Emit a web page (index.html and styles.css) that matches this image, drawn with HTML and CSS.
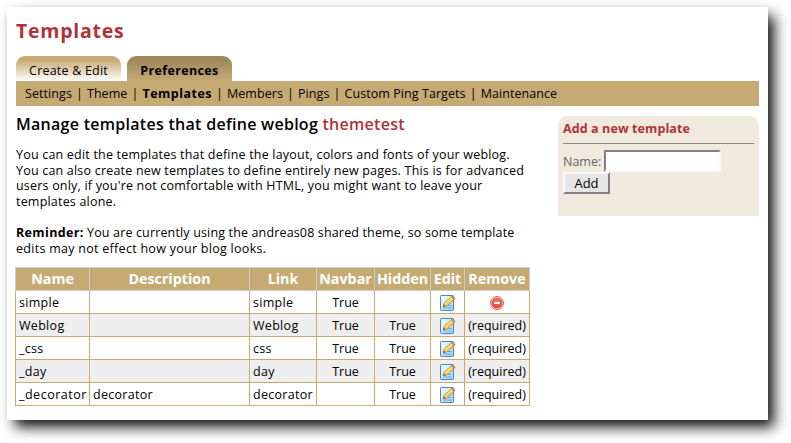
FILE: index.html
```html
<!DOCTYPE html>
<html lang="en">
<head>
<meta charset="utf-8">
<title>Templates</title>
<link rel="stylesheet" href="styles.css">
</head>
<body>
<svg width="0" height="0" class="defs">
  <defs>
    <linearGradient id="sheet" x1="0" y1="0" x2="1" y2="1"><stop offset="0" stop-color="#fff"/><stop offset="1" stop-color="#9ccdf5"/></linearGradient>
    <radialGradient id="red" cx=".5" cy=".35" r=".6"><stop offset="0" stop-color="#f47c6c"/><stop offset="1" stop-color="#db4437"/></radialGradient>
    <symbol id="edit" viewBox="0 0 16 16">
      <rect x=".5" y=".5" width="13" height="15" rx=".8" fill="url(#sheet)" stroke="#4587c4"/>
      <path d="M3 13h8.500M8 10.500h3.500" stroke="#5aa9e8" fill="none"/>
      <path d="M3.200 11.800l1-3.700L11.500 1.700l2.800 2.500L7 11z" fill="#f8cf52" stroke="#b57a2c" stroke-width=".7"/>
      <path d="M5.200 9l6.700-6.200" stroke="#fff2a8" fill="none"/>
      <path d="M11.500 1.900l1.300-.9 2.400 2.300-1 1.100z" fill="#c5a585" stroke="#7d5b48" stroke-width=".5"/>
      <path d="M3.200 11.800l.6-2.300 1.800 1.700z" fill="#76502f"/>
    </symbol>
    <symbol id="remove" viewBox="0 0 16 16">
      <circle cx="8" cy="8" r="6.600" fill="#f8c5bd" stroke="#d0685f" stroke-width=".9"/>
      <circle cx="8" cy="8" r="5.300" fill="url(#red)"/>
      <rect x="5" y="7" width="6" height="2" fill="#fff"/>
    </symbol>
  </defs>
</svg>
<main class="page">
  <h1><span>Templates</span></h1>
  <nav class="tabs"><a class="tab"><span>Create &amp; Edit</span></a><a class="tab active"><span>Preferences</span></a></nav>
  <nav class="menu"><span>Settings</span><i>|</i><span>Theme</span><i>|</i><b>Templates</b><i>|</i><span>Members</span><i>|</i><span>Pings</span><i>|</i><span>Custom Ping Targets</span><i>|</i><span>Maintenance</span></nav>
  <div class="columns">
    <section class="content">
      <h2>Manage templates that define weblog <em>themetest</em></h2>
      <p class="intro">You can edit the templates that define the layout, colors and fonts of your weblog.<br>You can also create new templates to define entirely new pages. This is for advanced<br>users only, if you're not comfortable with HTML, you might want to leave your<br>templates alone.</p>
      <p class="reminder"><b>Reminder:</b> You are currently using the andreas08 shared theme, so some template<br><span class="last">edits may not effect how your blog looks.</span></p>
      <table>
        <colgroup><col class="c-name"><col class="c-desc"><col class="c-link"><col class="c-nav"><col class="c-hidden"><col class="c-edit"><col class="c-remove"></colgroup>
        <thead><tr><th>Name</th><th>Description</th><th>Link</th><th>Navbar</th><th>Hidden</th><th>Edit</th><th>Remove</th></tr></thead>
        <tbody>
        <tr><td>simple</td><td></td><td>simple</td><td class="mid">True</td><td class="mid"></td><td class="mid"><svg class="icon"><use href="#edit"/></svg></td><td class="mid"><svg class="icon"><use href="#remove"/></svg></td></tr>
        <tr><td>Weblog</td><td></td><td>Weblog</td><td class="mid">True</td><td class="mid">True</td><td class="mid"><svg class="icon"><use href="#edit"/></svg></td><td class="mid">(required)</td></tr>
        <tr><td>_css</td><td></td><td>css</td><td class="mid">True</td><td class="mid">True</td><td class="mid"><svg class="icon"><use href="#edit"/></svg></td><td class="mid">(required)</td></tr>
        <tr><td>_day</td><td></td><td>day</td><td class="mid">True</td><td class="mid">True</td><td class="mid"><svg class="icon"><use href="#edit"/></svg></td><td class="mid">(required)</td></tr>
        <tr><td class="wide">_decorator</td><td>decorator</td><td>decorator</td><td class="mid"></td><td class="mid">True</td><td class="mid"><svg class="icon"><use href="#edit"/></svg></td><td class="mid">(required)</td></tr>
        </tbody>
      </table>
    </section>
    <aside>
      <h3>Add a new template</h3>
      <form><label>Name:</label><input type="text"><button type="button">Add</button></form>
    </aside>
  </div>
</main>
</body>
</html>
```

FILE: styles.css
```css
* { box-sizing: border-box; }
html { height: 443px; overflow: hidden; }
body { height: 443px; margin: 0; padding: 7px; background: #fff; font: 12.5px/16px "Open Sans", "Noto Sans", sans-serif; color: #000; overflow: hidden; }
.defs { position: absolute; }
.page { width: 761px; height: 413px; padding: 9px 9px 0; background: #fff; box-shadow: 7px 8px 13px -1px #111, 0 0 6px #f3f3f3; }
h1 { margin: 0; height: 40px; font-size: 19.5px; line-height: 29px; letter-spacing: .75px; color: #b03238; }
.tabs { display: flex; gap: 6px; height: 25px; }
.tab { width: 105px; height: 25px; line-height: 29px; text-align: center; letter-spacing: .2px; border-radius: 9px 9px 0 0; background: linear-gradient(#c6aa71 15%, #fff); }
.tab.active { font-weight: bold; letter-spacing: .35px; background: linear-gradient(#a0895f 20%, #c6aa74); }
.menu { display: flex; height: 25px; line-height: 25px; padding-left: 9px; background: #c6aa74; white-space: nowrap; letter-spacing: .07px; }
.menu b { letter-spacing: .48px; }
.menu i { width: 15px; text-align: center; font-style: normal; }
.columns { display: flex; justify-content: space-between; align-items: flex-start; }
.content { width: 515px; white-space: nowrap; }
h2 { margin: 7px 0 0; font-size: 16px; line-height: 22px; font-weight: 600; letter-spacing: .28px; }
h2 em { color: #b03238; font-style: normal; }
p { margin: 0; line-height: 15.500px; letter-spacing: .2px; }
.intro { margin-top: 12px; }
.reminder { margin-top: 16px; letter-spacing: .15px; }
.reminder b { letter-spacing: .35px; }
.last { letter-spacing: .28px; }
table { border-collapse: collapse; table-layout: fixed; width: 515px; margin: 11px 0 0 -1px; }
.c-name { width: 74px; } .c-desc { width: 160px; } .c-link { width: 67px; } .c-nav { width: 58px; } .c-hidden { width: 56px; } .c-edit { width: 34px; } .c-remove { width: 65px; }
tr { height: 23px; }
th, td { padding: 1px 3px 0; line-height: 16px; border: 1px solid #c6aa74; }
th { padding: 0; color: #fff; background: #c6aa74; border-color: #ccc; font-size: 14.300px; }
td { text-align: left; letter-spacing: .3px; }
tbody tr:nth-child(even) { background: #eee; }
.mid { text-align: center; padding: 1px 0 0; letter-spacing: 0; }
.wide { letter-spacing: .5px; }
.icon { display: block; width: 16px; height: 16px; margin: 0 auto; }
aside { width: 201px; height: 100px; margin-top: 10px; padding: 4px 5px; border-radius: 9px 9px 0 0; background: #f0e9de; }
h3 { margin: 0; height: 24px; font-size: 12.500px; line-height: 18px; letter-spacing: .1px; color: #b03238; border-bottom: 1px solid #888674; }
form { display: flex; flex-wrap: wrap; align-content: flex-start; padding-top: 6px; }
label { width: 41px; height: 22px; line-height: 24px; color: #666; }
input { width: 117px; height: 22px; padding: 0; background: #fff; border: 2px solid; border-color: #808080 #f8f8f8 #f8f8f8 #808080; }
button { width: 47px; height: 22px; padding: 0; font: inherit; font-size: 13px; line-height: 18px; background: #e5e5e5; border: 2px solid; border-color: #f8f8f8 #808080 #808080 #f8f8f8; }
```
